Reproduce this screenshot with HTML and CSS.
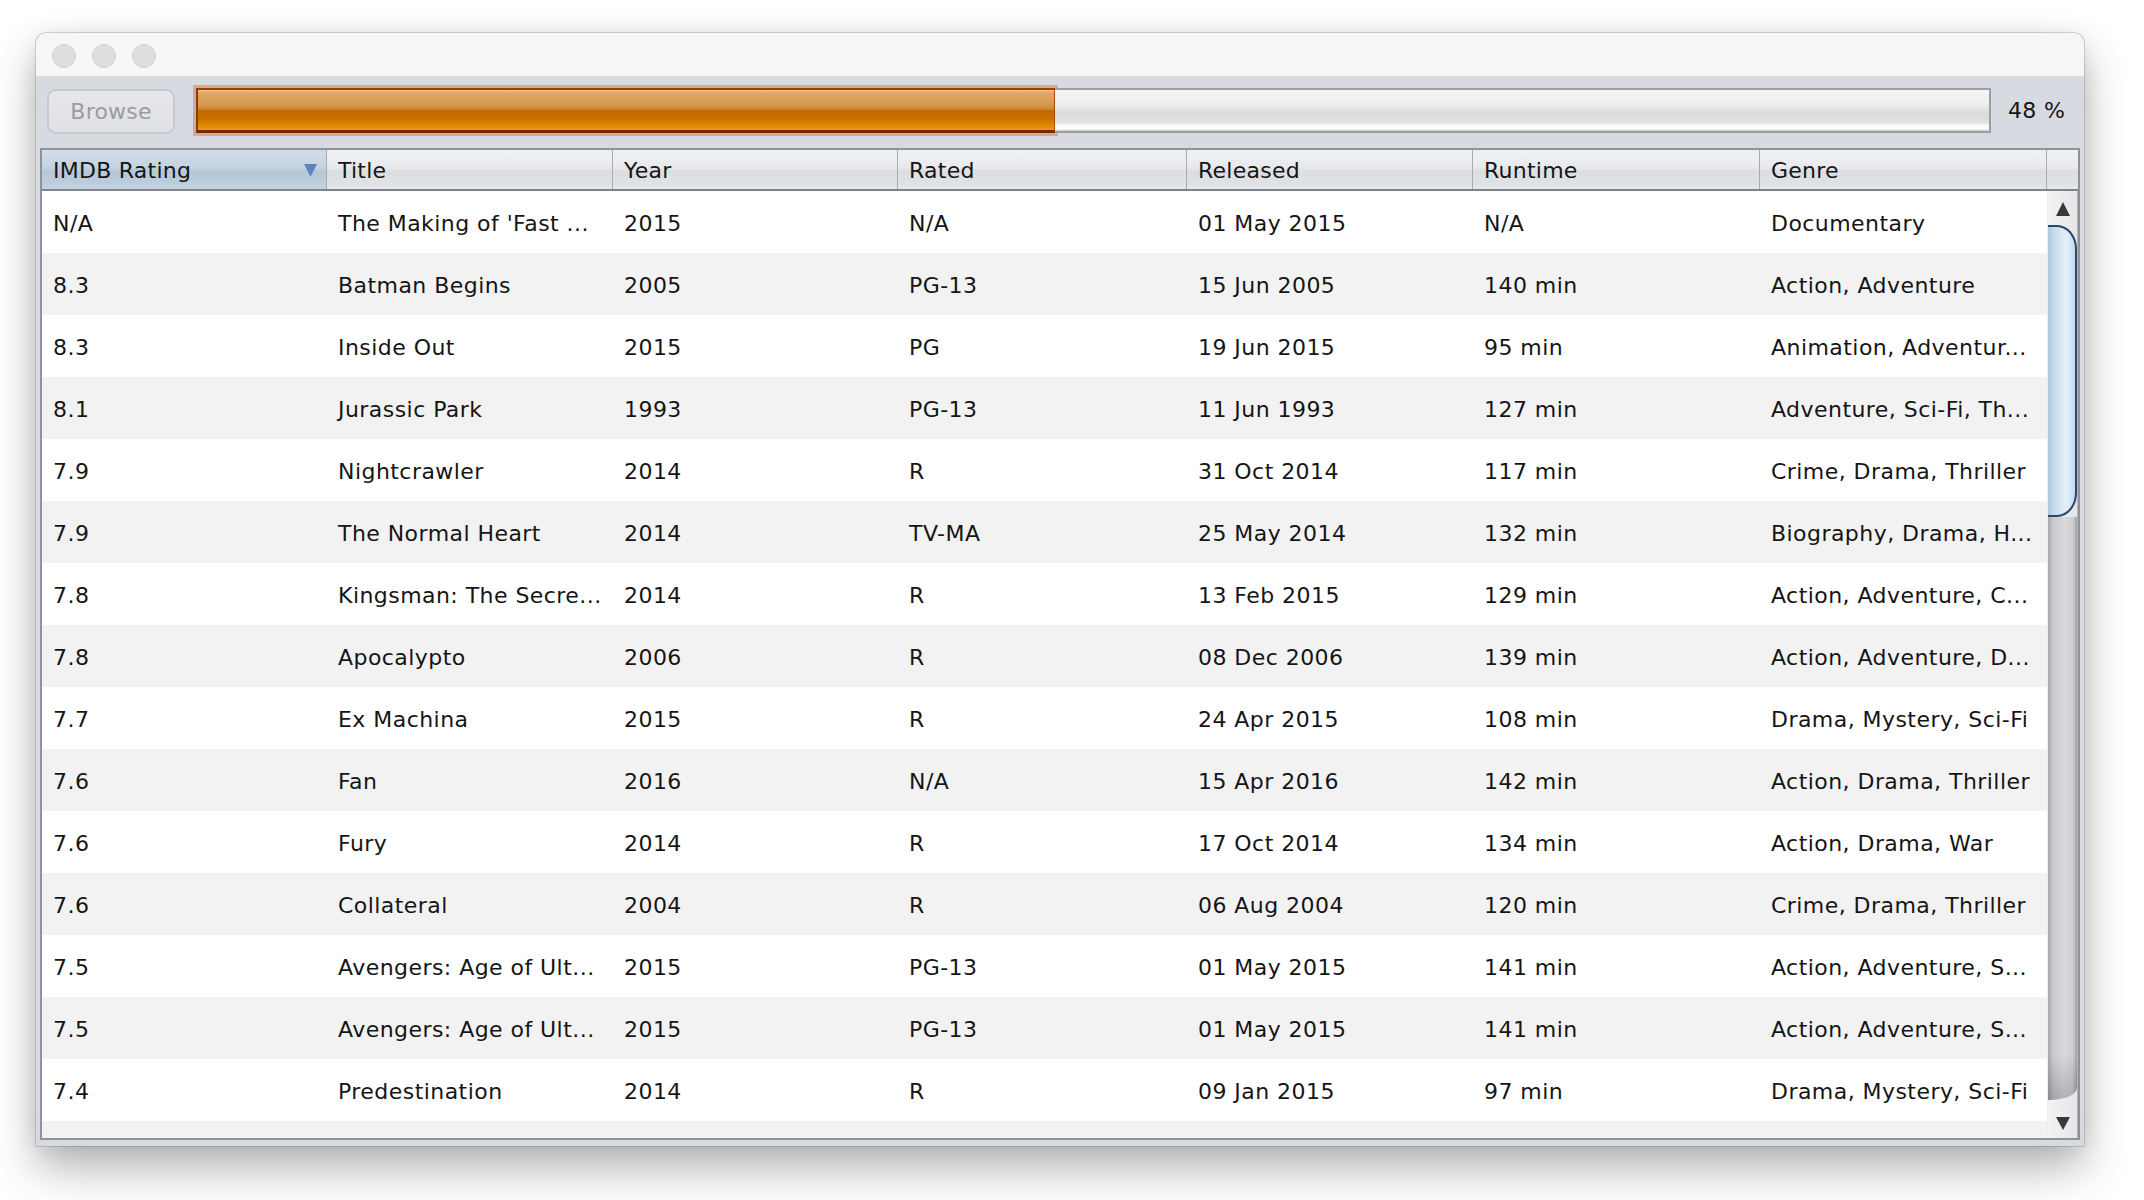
FILE: index.html
```html
<!DOCTYPE html>
<html>
<head>
<meta charset="utf-8">
<title>IMDB</title>
<link rel="stylesheet" href="styles.css">
</head>
<body>
<div class="stage">
  <div class="window">
    <div class="titlebar">
      <span class="light"></span><span class="light"></span><span class="light"></span>
    </div>
    <div class="toolbar">
      <div class="browse">Browse</div>
      <div class="progress">
        <div class="fill"></div>
        <div class="rest"></div>
      </div>
      <div class="pct">48 %</div>
    </div>
    <div class="table">
      <div class="head">
        <div class="hcell sorted w1"><span>IMDB Rating</span><svg class="sort" width="13" height="13" viewBox="0 0 13 13"><polygon points="0,0 13,0 6.5,13" fill="#5b87b8"/></svg></div>
        <div class="hcell w2">Title</div>
        <div class="hcell w3">Year</div>
        <div class="hcell w4">Rated</div>
        <div class="hcell w5">Released</div>
        <div class="hcell w6">Runtime</div>
        <div class="hcell w7">Genre</div>
        <div class="hcell corner"></div>
      </div>
      <div class="body">
        <div class="rows">
          <div class="row"><div class="cell">N/A</div><div class="cell">The Making of 'Fast ...</div><div class="cell">2015</div><div class="cell">N/A</div><div class="cell">01 May 2015</div><div class="cell">N/A</div><div class="cell">Documentary</div></div>
          <div class="row"><div class="cell">8.3</div><div class="cell">Batman Begins</div><div class="cell">2005</div><div class="cell">PG-13</div><div class="cell">15 Jun 2005</div><div class="cell">140 min</div><div class="cell">Action, Adventure</div></div>
          <div class="row"><div class="cell">8.3</div><div class="cell">Inside Out</div><div class="cell">2015</div><div class="cell">PG</div><div class="cell">19 Jun 2015</div><div class="cell">95 min</div><div class="cell">Animation, Adventur...</div></div>
          <div class="row"><div class="cell">8.1</div><div class="cell">Jurassic Park</div><div class="cell">1993</div><div class="cell">PG-13</div><div class="cell">11 Jun 1993</div><div class="cell">127 min</div><div class="cell">Adventure, Sci-Fi, Th...</div></div>
          <div class="row"><div class="cell">7.9</div><div class="cell">Nightcrawler</div><div class="cell">2014</div><div class="cell">R</div><div class="cell">31 Oct 2014</div><div class="cell">117 min</div><div class="cell">Crime, Drama, Thriller</div></div>
          <div class="row"><div class="cell">7.9</div><div class="cell">The Normal Heart</div><div class="cell">2014</div><div class="cell">TV-MA</div><div class="cell">25 May 2014</div><div class="cell">132 min</div><div class="cell">Biography, Drama, H...</div></div>
          <div class="row"><div class="cell">7.8</div><div class="cell">Kingsman: The Secre...</div><div class="cell">2014</div><div class="cell">R</div><div class="cell">13 Feb 2015</div><div class="cell">129 min</div><div class="cell">Action, Adventure, C...</div></div>
          <div class="row"><div class="cell">7.8</div><div class="cell">Apocalypto</div><div class="cell">2006</div><div class="cell">R</div><div class="cell">08 Dec 2006</div><div class="cell">139 min</div><div class="cell">Action, Adventure, D...</div></div>
          <div class="row"><div class="cell">7.7</div><div class="cell">Ex Machina</div><div class="cell">2015</div><div class="cell">R</div><div class="cell">24 Apr 2015</div><div class="cell">108 min</div><div class="cell">Drama, Mystery, Sci-Fi</div></div>
          <div class="row"><div class="cell">7.6</div><div class="cell">Fan</div><div class="cell">2016</div><div class="cell">N/A</div><div class="cell">15 Apr 2016</div><div class="cell">142 min</div><div class="cell">Action, Drama, Thriller</div></div>
          <div class="row"><div class="cell">7.6</div><div class="cell">Fury</div><div class="cell">2014</div><div class="cell">R</div><div class="cell">17 Oct 2014</div><div class="cell">134 min</div><div class="cell">Action, Drama, War</div></div>
          <div class="row"><div class="cell">7.6</div><div class="cell">Collateral</div><div class="cell">2004</div><div class="cell">R</div><div class="cell">06 Aug 2004</div><div class="cell">120 min</div><div class="cell">Crime, Drama, Thriller</div></div>
          <div class="row"><div class="cell">7.5</div><div class="cell">Avengers: Age of Ult...</div><div class="cell">2015</div><div class="cell">PG-13</div><div class="cell">01 May 2015</div><div class="cell">141 min</div><div class="cell">Action, Adventure, S...</div></div>
          <div class="row"><div class="cell">7.5</div><div class="cell">Avengers: Age of Ult...</div><div class="cell">2015</div><div class="cell">PG-13</div><div class="cell">01 May 2015</div><div class="cell">141 min</div><div class="cell">Action, Adventure, S...</div></div>
          <div class="row"><div class="cell">7.4</div><div class="cell">Predestination</div><div class="cell">2014</div><div class="cell">R</div><div class="cell">09 Jan 2015</div><div class="cell">97 min</div><div class="cell">Drama, Mystery, Sci-Fi</div></div>
          <div class="row"></div>
        </div>
        <div class="scroll">
          <div class="sbtn up"><svg width="14" height="14" viewBox="0 0 14 14"><polygon points="7,0 14,14 0,14" fill="#383838"/></svg></div>
          <div class="thumb"></div>
          <div class="track"></div>
          <div class="sbtn down"><svg width="14" height="13" viewBox="0 0 14 13"><polygon points="0,0 14,0 7,13" fill="#383838"/></svg></div>
        </div>
      </div>
    </div>
  </div>
</div>
</body>
</html>
```

FILE: styles.css
```css
html, body {
  margin: 0;
  padding: 0;
}
body {
  width: 2144px;
  height: 1200px;
  overflow: hidden;
  background: #ffffff;
  font-family: "DejaVu Sans", "Liberation Sans", sans-serif;
  color: #151515;
}
.stage {
  padding: 33px 0 0 36px;
}
.window {
  width: 2048px;
  height: 1113px;
  border-radius: 10px 10px 0 0;
  background: #d7dae0;
  box-shadow: 0 0 0 1px rgba(0, 0, 0, 0.14), 0 22px 44px rgba(0, 0, 0, 0.30), 0 0 22px rgba(0, 0, 0, 0.07);
  display: flex;
  flex-direction: column;
  overflow: hidden;
}
.titlebar {
  height: 40px;
  padding: 3px 0 0 16px;
  background: #f6f6f6;
  border-bottom: 1px solid #dcdcdc;
  display: flex;
  align-items: center;
  gap: 16px;
}
.light {
  width: 22px;
  height: 22px;
  border-radius: 50%;
  background: #dedede;
  border: 1px solid #d1d1d1;
}
.toolbar {
  height: 71px;
  box-sizing: border-box;
  padding: 11px 20px 0 11px;
  display: flex;
  align-items: flex-start;
}
.browse {
  margin-top: 1px;
  width: 128px;
  height: 45px;
  box-sizing: border-box;
  border: 2px solid #c7c9ce;
  border-radius: 9px;
  background: linear-gradient(#e5e7ea, #dfe1e5);
  color: #9c9c9c;
  font-size: 22px;
  letter-spacing: 0.2px;
  display: flex;
  align-items: center;
  justify-content: center;
}
.progress {
  margin-left: 21px;
  flex: 1;
  height: 45px;
  display: flex;
}
.fill {
  width: 859px;
  box-sizing: border-box;
  border-style: solid;
  border-width: 2px 1px 3px 2px;
  border-color: #9a4200 #a84c00 #7a2400 #8e3a00;
  background: linear-gradient(#f2c894 0%, #e0a86a 6%, #d89a52 35%, #d08838 47%, #c46a00 52%, #c86e00 70%, #e08400 88%, #f29a10 100%);
  box-shadow: 0 0 0 3px rgba(196, 118, 56, 0.45);
}
.rest {
  flex: 1;
  box-sizing: border-box;
  border: 2px solid #9c9ea3;
  border-left: none;
  background: linear-gradient(#f6f6f6 0%, #eeeeee 35%, #e2e2e2 50%, #dadada 58%, #e2e2e2 80%, #fbfbfb 86%, #ffffff 95%, #c4c4c4 100%);
}
.pct {
  margin-left: 17px;
  width: 56px;
  font-size: 22px;
  line-height: 45px;
  letter-spacing: 0.3px;
  white-space: nowrap;
  color: #151515;
}
.table {
  margin: 0 4px 6px 4px;
  flex: 1;
  min-height: 0;
  border: 2px solid #8f9298;
  background: #ffffff;
  display: flex;
  flex-direction: column;
}
.head {
  display: flex;
  height: 39px;
  border-bottom: 2px solid #7f838a;
}
.hcell {
  box-sizing: border-box;
  padding-left: 11px;
  padding-top: 1px;
  font-size: 22px;
  line-height: 39px;
  letter-spacing: 0.25px;
  white-space: nowrap;
  border-right: 1px solid #a8abb0;
  background: linear-gradient(#f0f1f4 0%, #e7e9ec 45%, #dcdee2 55%, #dfe1e5 85%, #e6e8eb 100%);
}
.hcell.sorted {
  display: flex;
  justify-content: space-between;
  align-items: center;
  padding-right: 9px;
  background: linear-gradient(#d2dde7 0%, #c4d3e0 45%, #b6c8d8 55%, #bccddc 85%, #c6d4e1 100%);
}
.sort {
  margin-top: 1px;
}
.w1 { width: 285px; }
.w2 { width: 286px; }
.w3 { width: 285px; }
.w4 { width: 289px; }
.w5 { width: 286px; }
.w6 { width: 287px; }
.w7 { width: 287px; }
.corner {
  width: 31px;
  border-right: none;
}
.body {
  flex: 1;
  min-height: 0;
  display: flex;
  overflow: hidden;
}
.rows {
  width: 2005px;
  overflow: hidden;
}
.row {
  display: grid;
  grid-template-columns: 285px 286px 285px 289px 286px 287px 287px;
  height: 62px;
  align-items: center;
  background: #ffffff;
}
.row:nth-child(even) {
  background: #f2f2f2;
}
.cell {
  padding-left: 11px;
  padding-top: 2px;
  font-size: 22px;
  letter-spacing: 0.45px;
  white-space: nowrap;
  overflow: hidden;
  color: #151515;
}
.scroll {
  width: 31px;
  box-sizing: border-box;
  border-left: 1px solid #ededed;
  border-right: 1px solid #b4b4ba;
  display: flex;
  flex-direction: column;
  background: linear-gradient(to right, #f3f3f4, #e6e6e8);
}
.sbtn {
  display: flex;
  justify-content: center;
}
.sbtn.up {
  height: 34px;
  box-sizing: border-box;
  padding-top: 11px;
}
.sbtn.down {
  height: 38px;
  box-sizing: border-box;
  padding-top: 17px;
}
.thumb {
  height: 292px;
  box-sizing: border-box;
  border: 2px solid #27476b;
  border-left: none;
  border-radius: 0 20px 20px 0 / 0 24px 24px 0;
  background: linear-gradient(to right, #adc7de 0%, #c8dcee 25%, #dcebf7 55%, #e2eff9 70%, #c4d9ec 100%);
}
.track {
  flex: 1;
  border-radius: 0 0 28px 0 / 0 0 12px 0;
  background:
    linear-gradient(to bottom, rgba(0, 0, 0, 0) 92%, rgba(0, 0, 0, 0.18) 100%),
    linear-gradient(to right, #a6a6ae 0%, #c9c9ce 18%, #d9d9dd 55%, #d0d0d4 85%, #a2a2aa 100%);
}
```
